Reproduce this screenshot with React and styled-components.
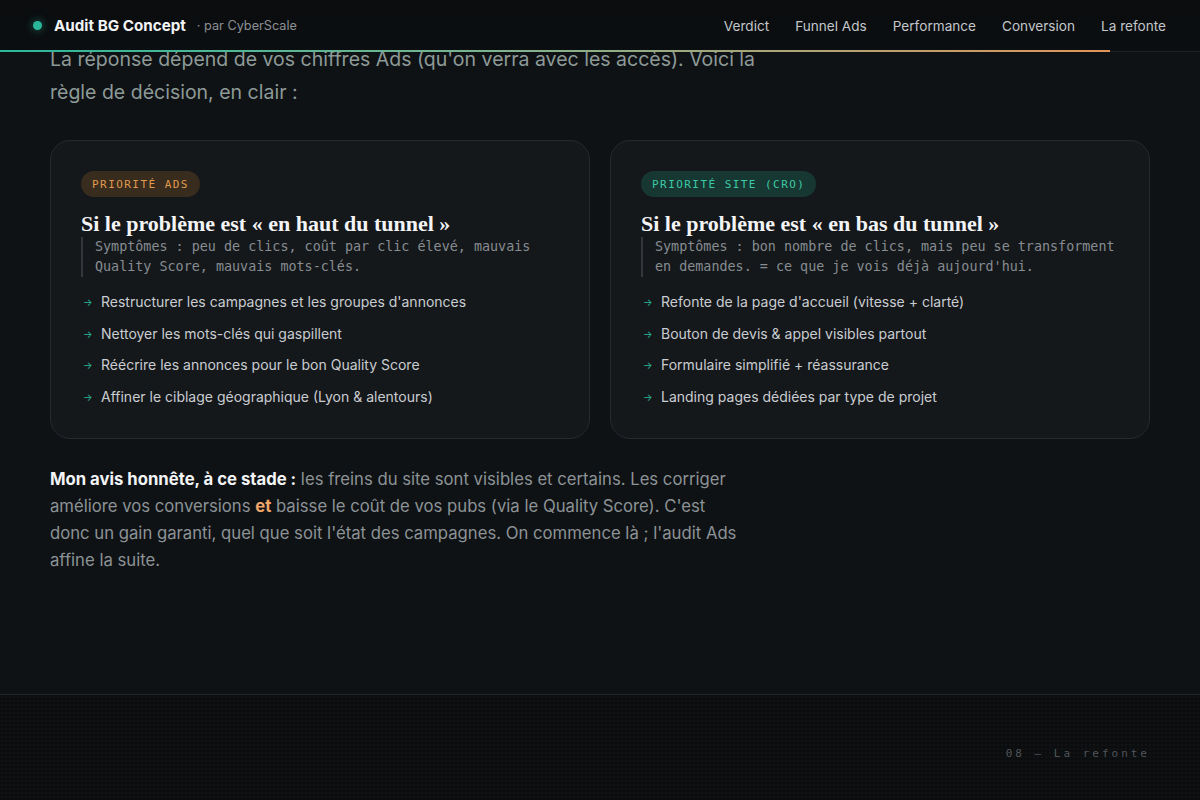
import styled, { createGlobalStyle } from "styled-components";

const Global = createGlobalStyle`
  html, body { margin: 0; padding: 0; background: #0f1215; }
  body { font-family: Inter, "Noto Sans", sans-serif; color: #c9cdd1; }
  * { box-sizing: border-box; }
`

const sans = `Inter, "Noto Sans", sans-serif`
const mono = `"DejaVu Sans Mono", "Liberation Mono", monospace`
const serif = `"Liberation Serif", "DejaVu Serif", serif`

export default function App() {
  return (
    <>
      <Global />
      <Header>
        <Brand>
          <Dot />
          <BrandName>Audit BG Concept</BrandName>
          <BrandBy>· par CyberScale</BrandBy>
        </Brand>
        <Nav>
          <a>Verdict</a>
          <a>Funnel Ads</a>
          <a>Performance</a>
          <a>Conversion</a>
          <a>La refonte</a>
        </Nav>
        <Progress />
      </Header>

      <Main>
        <Lead>
          La réponse dépend de vos chiffres Ads (qu'on verra avec les accès). Voici la
          règle de décision, en clair :
        </Lead>

        <Cards>
          <PriorityCard
            tone="ads"
            badge="Priorité Ads"
            title="Si le problème est « en haut du tunnel »"
            symptoms="Symptômes : peu de clics, coût par clic élevé, mauvais Quality Score, mauvais mots-clés."
            items={[
              "Restructurer les campagnes et les groupes d'annonces",
              "Nettoyer les mots-clés qui gaspillent",
              "Réécrire les annonces pour le bon Quality Score",
              "Affiner le ciblage géographique (Lyon & alentours)",
            ]}
          />
          <PriorityCard
            tone="site"
            badge="Priorité Site (CRO)"
            title="Si le problème est « en bas du tunnel »"
            symptoms="Symptômes : bon nombre de clics, mais peu se transforment en demandes. = ce que je vois déjà aujourd'hui."
            items={[
              "Refonte de la page d'accueil (vitesse + clarté)",
              "Bouton de devis & appel visibles partout",
              "Formulaire simplifié + réassurance",
              "Landing pages dédiées par type de projet",
            ]}
          />
        </Cards>

        <Verdict>
          <strong>Mon avis honnête, à ce stade :</strong> les freins du site sont visibles et
          certains. Les corriger améliore vos conversions <em>et</em> baisse le coût de vos
          pubs (via le Quality Score). C'est donc un gain garanti, quel que soit l'état des
          campagnes. On commence là ; l'audit Ads affine la suite.
        </Verdict>
      </Main>

      <Footer>
        <FooterLabel>08 — La refonte</FooterLabel>
      </Footer>
    </>
  )
}

function PriorityCard({ tone, badge, title, symptoms, items }) {
  return (
    <Card>
      <Badge tone={tone}>{badge}</Badge>
      <CardTitle>{title}</CardTitle>
      <Symptoms>{symptoms}</Symptoms>
      <List>
        {items.map((it, i) => (
          <li key={i}>
            <Arrow>→</Arrow>
            {it}
          </li>
        ))}
      </List>
    </Card>
  )
}

const Header = styled.header`
position: fixed;
top: 0;
left: 0;
right: 0;
height: 52px;
z-index: 10;
display: flex;
align-items: center;
justify-content: space-between;
padding: 0 34px 0 33px;
background: linear-gradient(180deg, #0a0c0e 0%, #0c0f11 100%);
border-bottom: 1px solid #1e2226;
`

const Progress = styled.div`
position: absolute;
left: 0;
bottom: -1px;
height: 2px;
width: 92.5%;
background: linear-gradient(90deg, #2bb89a 0%, #7fb38f 45%, #e0955a 100%);
`

const Brand = styled.div`
display: flex;
align-items: center;
`

const Dot = styled.span`
width: 9px;
height: 9px;
border-radius: 50%;
background: #2bb89a;
box-shadow: 0 0 8px rgba(43, 184, 154, 0.6);
margin-right: 12px;
`

const BrandName = styled.span`
font-family: ${sans};
font-weight: 700;
font-size: 15.2px;
color: #f1f3f4;
margin-right: 11px;
`

const BrandBy = styled.span`
font-family: ${sans};
font-size: 12.7px;
color: #8b9094;
`

const Nav = styled.nav`
display: flex;
gap: 26px;
a {
    font-family: ${sans};
    font-size: 13.6px;
    color: #c3c7cb;
    cursor: pointer;
}
`

const Main = styled.main`
padding: 43px 50px 0;
`

const Lead = styled.p`
margin: 0;
max-width: 740px;
font-family: ${sans};
font-size: 19.5px;
line-height: 33px;
color: #8d9a97;
`

const Cards = styled.div`
display: grid;
grid-template-columns: 1fr 1fr;
gap: 20px;
margin-top: 31px;
`

const Card = styled.div`
background: #15181b;
border: 1px solid #262a2f;
border-radius: 20px;
padding: 30px 30px 30px;
display: flex;
flex-direction: column;
align-items: flex-start;
`

const Badge = styled.span`
display: inline-flex;
align-items: center;
height: 26px;
padding: 0 11px;
border-radius: 13px;
font-family: ${mono};
font-size: 11px;
letter-spacing: 1.45px;
text-transform: uppercase;
background: ${p => p.tone === "ads" ? "#372c1d" : "#173733"};
color: ${p => p.tone === "ads" ? "#e09a4e" : "#3cc9a5"};
`

const CardTitle = styled.h3`
margin: 14px 0 0;
font-family: ${serif};
font-weight: 700;
font-size: 22px;
line-height: 26px;
color: #f3f4f5;
`

const Symptoms = styled.p`
margin: 0;
padding-left: 12px;
border-left: 2px solid #33373c;
font-family: ${mono};
font-size: 13.4px;
line-height: 20px;
color: #868c91;
`

const List = styled.ul`
list-style: none;
margin: 14px 0 0;
padding: 0;
display: flex;
flex-direction: column;
gap: 9.5px;
li {
    font-family: ${sans};
    font-size: 14px;
    line-height: 22px;
    color: #c9cdd1;
    display: flex;
    align-items: center;
}
`

const Arrow = styled.span`
color: #2bb89a;
font-size: 10px;
width: 20px;
padding-left: 2px;
`

const Verdict = styled.p`
margin: 27px 0 0;
max-width: 690px;
font-family: ${sans};
font-size: 16.7px;
line-height: 27px;
color: #8c9296;
strong {
    color: #f3f4f5;
    font-weight: 700;
}
em {
    font-style: normal;
    font-weight: 700;
    color: #f0a56a;
}
`

const Footer = styled.footer`
margin-top: 120px;
height: 106px;
border-top: 1px solid #22262a;
background-color: #0b0d0f;
background-image: radial-gradient(rgba(255, 255, 255, 0.025) 1px, transparent 1px);
background-size: 4px 4px;
display: flex;
justify-content: flex-end;
align-items: center;
padding: 0 50px 0;
`

const FooterLabel = styled.span`
margin-top: 12px;
font-family: ${mono};
font-size: 11px;
letter-spacing: 3px;
color: #50555a;
`
